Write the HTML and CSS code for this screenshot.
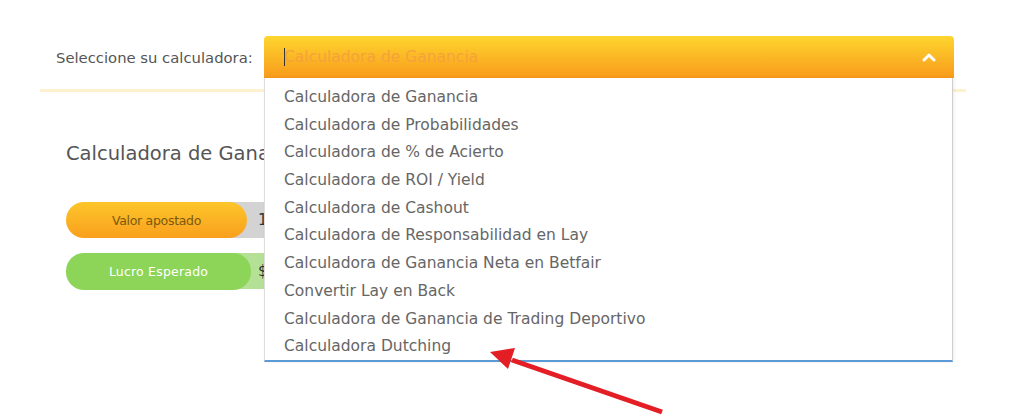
FILE: index.html
```html
<!DOCTYPE html>
<html lang="es">
<head>
<meta charset="utf-8">
<title>Calculadoras</title>
<link rel="stylesheet" href="styles.css">
</head>
<body>
<div class="page">
  <div class="picker-row">
    <label class="picker-label">Seleccione su calculadora:</label>
    <div class="picker">
      <div class="picker-box">
        <span class="caret"></span>
        <span class="picker-value">Calculadora de Ganancia</span>
        <svg class="chevron" width="14" height="10" viewBox="0 0 14 10"><path d="M2 8 L7 3 L12 8" fill="none" stroke="#fff" stroke-width="3" stroke-linecap="round" stroke-linejoin="round"/></svg>
      </div>
      <ul class="options">
        <li>Calculadora de Ganancia</li>
        <li>Calculadora de Probabilidades</li>
        <li>Calculadora de % de Acierto</li>
        <li>Calculadora de ROI / Yield</li>
        <li>Calculadora de Cashout</li>
        <li>Calculadora de Responsabilidad en Lay</li>
        <li>Calculadora de Ganancia Neta en Betfair</li>
        <li>Convertir Lay en Back</li>
        <li>Calculadora de Ganancia de Trading Deportivo</li>
        <li>Calculadora Dutching</li>
      </ul>
    </div>
  </div>
  <div class="divider"></div>
  <section class="calc">
    <h2 class="calc-title">Calculadora de Ganancia</h2>
    <div class="field">
      <span class="pill pill-orange">Valor apostado</span>
      <span class="input input-gray">1</span>
    </div>
    <div class="field">
      <span class="pill pill-green">Lucro Esperado</span>
      <span class="input input-green">$</span>
    </div>
  </section>
  <svg class="arrow" width="200" height="90" viewBox="0 0 200 90">
    <line x1="180" y1="79" x2="30" y2="27" stroke="#e31e24" stroke-width="5"/>
    <polygon points="8,19 33,15 26,36" fill="#e31e24"/>
  </svg>
</div>
</body>
</html>
```

FILE: styles.css
```css
* { box-sizing: border-box; }
html, body { margin: 0; padding: 0; background: #fff; }
body {
  font-family: "DejaVu Sans", "Open Sans", sans-serif;
  color: #555;
  width: 1024px;
  height: 416px;
  overflow: hidden;
}
.page {
  position: relative;
  padding: 36px 58px 0 40px;
}
.picker-row {
  display: flex;
  align-items: center;
  padding: 0 12px 0 16px;
}
.picker-label {
  width: 208px;
  font-size: 14.8px;
  color: #555;
  white-space: nowrap;
}
.picker {
  position: relative;
  flex: 1;
}
.picker-box {
  height: 42px;
  border-radius: 4px 4px 0 0;
  background: linear-gradient(#fdd62e, #f99a1c);
  display: flex;
  align-items: center;
  padding: 0 18px 0 20px;
  position: relative;
}
.caret {
  width: 1px;
  height: 18px;
  background: #333;
  margin-right: -1px;
}
.picker-value {
  flex: 1;
  font-size: 15.5px;
  color: #f6a23a;
}
.options {
  position: absolute;
  left: 0;
  right: 1px;
  top: 42px;
  z-index: 2;
  margin: 0;
  padding: 5px 0 0;
  list-style: none;
  background: #fff;
  border-left: 1px solid #ddd;
  border-right: 1px solid #cfcfcf;
  border-bottom: 2px solid #5b9bd5;
  box-shadow: 1px 0 3px rgba(0,0,0,0.08);
}
.options li {
  height: 27.7px;
  line-height: 28px;
  padding-left: 19px;
  font-size: 15.5px;
  color: #666;
  white-space: nowrap;
}
.divider {
  height: 3px;
  margin-top: 11px;
  background: #fdf1cf;
}
.calc {
  padding: 50px 0 0 26px;
}
.calc-title {
  margin: 0 0 37px;
  white-space: nowrap;
  font-weight: normal;
  font-size: 19.5px;
  color: #555;
}
.field {
  display: flex;
  align-items: center;
  height: 36px;
  margin-bottom: 15px;
}
.pill {
  width: 181px;
  height: 36px;
  border-radius: 18px;
  display: flex;
  align-items: center;
  justify-content: center;
  font-size: 12.5px;
  position: relative;
  z-index: 1;
}
.pill-orange {
  background: linear-gradient(#fdc52a, #f9a01e);
  color: #7a5a10;
  letter-spacing: -0.3px;
}
.pill-green {
  background: #8dd558;
  color: #fff;
  width: 185px;
  height: 37px;
  letter-spacing: 0.2px;
}
.input {
  margin-left: -20px;
  width: 200px;
  height: 36px;
  display: flex;
  align-items: center;
  padding-left: 31px;
  font-size: 15px;
  color: #333;
}
.input-gray { background: #d3d3d3; }
.input-green { background: #b4e196; margin-left: -24px; padding-left: 31px; }
.arrow {
  position: absolute;
  left: 482px;
  top: 333px;
  z-index: 3;
}
```
